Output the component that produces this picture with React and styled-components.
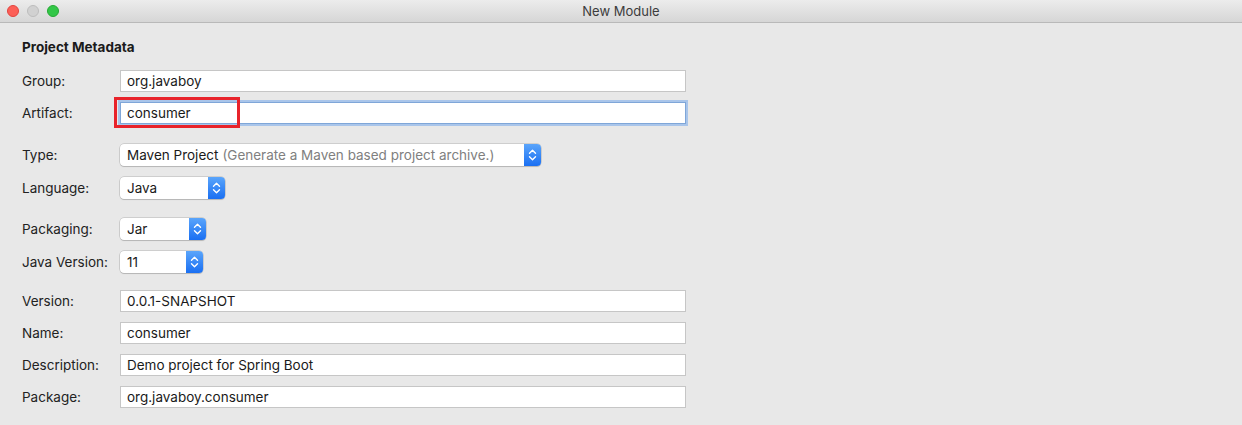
import React from "react";
import styled, { createGlobalStyle } from "styled-components";

const Global = createGlobalStyle`
  html, body { margin: 0; padding: 0; background: #e8e8e8; }
  body { font-family: Inter, "Noto Sans", "Liberation Sans", sans-serif; font-size: 13.5px; color: #1e1e1e; }
  * { box-sizing: border-box; }
`;

const Window = styled.div`
  width: 1242px;
  height: 425px;
  background: #e8e8e8;
  display: flex;
  flex-direction: column;
`;

const TitleBar = styled.div`
  height: 23px;
  flex: none;
  display: flex;
  align-items: center;
  position: relative;
  background: linear-gradient(#ececec, #d6d6d6);
  border-bottom: 1px solid #b9b9b9;
`;

const Lights = styled.div`
  display: flex;
  gap: 8px;
  padding-left: 7px;
`;

const Light = styled.span`
  width: 12px;
  height: 12px;
  border-radius: 50%;
  background: ${(p) => p.$c};
  border: 1px solid ${(p) => p.$b};
`;

const Title = styled.div`
  position: absolute;
  left: 0;
  right: 0;
  text-align: center;
  font-size: 13px;
  color: #3c3c3c;
  pointer-events: none;
`;

const Content = styled.div`
  padding: 16px 0 0 22px;
  display: flex;
  flex-direction: column;
`;

const Heading = styled.div`
  font-weight: 700;
  font-size: 13.5px;
  height: 16px;
  line-height: 16px;
  color: #1a1a1a;
  margin-bottom: 15px;
`;

const Section = styled.div`
  display: flex;
  flex-direction: column;
  gap: 10px;
  margin-top: ${(p) => p.$mt || 0}px;
`;

const Row = styled.div`
  display: grid;
  grid-template-columns: 98px auto;
  align-items: center;
  height: ${(p) => p.$h || 22}px;
`;

const Label = styled.div`
  color: #222;
`;

const InputBox = styled.div`
  position: relative;
  width: 566px;
  height: 22px;
  background: #fff;
  border: 1px solid ${(p) => (p.$focus ? "#7fa6d8" : "#c6c6c6")};
  box-shadow: ${(p) => (p.$focus ? "0 0 0 2px #a9c5ea" : "none")};
  display: flex;
  align-items: center;
  padding-left: 6px;
  color: #1a1a1a;
`;

const Highlight = styled.div`
  position: absolute;
  left: -7px;
  top: -6px;
  width: 126px;
  height: 31px;
  border: 3px solid #e8232b;
  pointer-events: none;
`;

const Select = styled.div`
  width: ${(p) => p.$w}px;
  height: 22px;
  background: #fff;
  border-radius: 4px;
  box-shadow: 0 0 0 0.5px rgba(0, 0, 0, 0.22), 0 1px 1px rgba(0, 0, 0, 0.12);
  display: flex;
  align-items: stretch;
  overflow: hidden;
`;

const SelectText = styled.div`
  flex: 1;
  display: flex;
  align-items: center;
  padding-left: 7px;
  color: #1a1a1a;
  white-space: nowrap;
`;

const Hint = styled.span`
  color: #808080;
  margin-left: 4px;
`;

const Stepper = styled.div`
  width: 17px;
  flex: none;
  background: linear-gradient(#5aa5fb, #1a6ff2);
  display: flex;
  align-items: center;
  justify-content: center;
`;

const Chevrons = () => (
  <svg width="9" height="14" viewBox="0 0 9 14" fill="none" stroke="#fff" strokeWidth="1.4" strokeLinecap="round" strokeLinejoin="round">
    <path d="M1.5 5.2 L4.5 2.2 L7.5 5.2" />
    <path d="M1.5 8.8 L4.5 11.8 L7.5 8.8" />
  </svg>
);

const Field = ({ label, value, focus, highlight }) => (
  <Row>
    <Label>{label}</Label>
    <InputBox $focus={focus}>
      {value}
      {highlight && <Highlight />}
    </InputBox>
  </Row>
);

const Drop = ({ label, value, hint, w }) => (
  <Row $h={23}>
    <Label>{label}</Label>
    <Select $w={w}>
      <SelectText>
        {value}
        {hint && <Hint>{hint}</Hint>}
      </SelectText>
      <Stepper>
        <Chevrons />
      </Stepper>
    </Select>
  </Row>
);

export default function App() {
  return (
    <>
      <Global />
      <Window>
        <TitleBar>
          <Lights>
            <Light $c="#fc5f57" $b="#e2443f" />
            <Light $c="#d1d1d1" $b="#bdbdbd" />
            <Light $c="#33c748" $b="#26a934" />
          </Lights>
          <Title>New Module</Title>
        </TitleBar>
        <Content>
          <Heading>Project Metadata</Heading>
          <Section>
            <Field label="Group:" value="org.javaboy" />
            <Field label="Artifact:" value="consumer" focus highlight />
          </Section>
          <Section $mt={19}>
            <Drop label="Type:" value="Maven Project" hint="(Generate a Maven based project archive.)" w={421} />
            <Drop label="Language:" value="Java" w={105} />
          </Section>
          <Section $mt={18}>
            <Drop label="Packaging:" value="Jar" w={86} />
            <Drop label="Java Version:" value="11" w={83} />
          </Section>
          <Section $mt={17}>
            <Field label="Version:" value="0.0.1-SNAPSHOT" />
            <Field label="Name:" value="consumer" />
            <Field label="Description:" value="Demo project for Spring Boot" />
            <Field label="Package:" value="org.javaboy.consumer" />
          </Section>
        </Content>
      </Window>
    </>
  );
}
